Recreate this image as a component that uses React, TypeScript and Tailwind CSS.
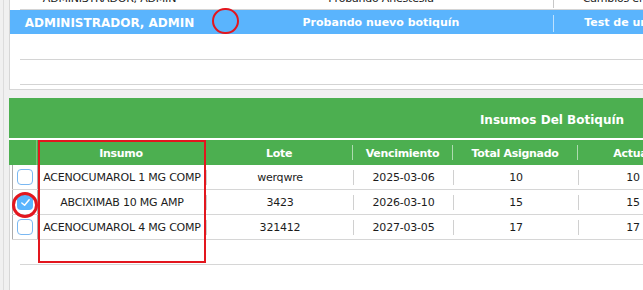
const FONT = "font-['DejaVu_Sans',Verdana,sans-serif]";

type Item = { insumo: string; lote: string; vence: string; total: number; actual: number; checked: boolean };

const ITEMS: Item[] = [
  { insumo: "ACENOCUMAROL 1 MG COMP", lote: "werqwre", vence: "2025-03-06", total: 10, actual: 10, checked: false },
  { insumo: "ABCIXIMAB 10 MG AMP", lote: "3423", vence: "2026-03-10", total: 15, actual: 15, checked: true },
  { insumo: "ACENOCUMAROL 4 MG COMP", lote: "321412", vence: "2027-03-05", total: 17, actual: 17, checked: false },
];

const BOTIQUINES = [
  { user: "ADMINISTRADOR, ADMIN", name: "Probando Anestesia", desc: "Cambios en el botiquín", selected: false },
  { user: "ADMINISTRADOR, ADMIN", name: "Probando nuevo botiquín", desc: "Test de un botiquín", selected: true },
  { user: "", name: "", desc: "", selected: false },
  { user: "", name: "", desc: "", selected: false },
];

function Sep({ light }: { light?: boolean }) {
  return <div className={`w-px h-[15px] shrink-0 self-center ${light ? "bg-white/55" : "bg-[#d0d0d0]"}`} />;
}

function Checkbox({ checked }: { checked: boolean }) {
  if (checked) {
    return (
      <div className="w-[16px] h-[16px] rounded-[4px] bg-[#5ab4fd] flex items-center justify-center">
        <svg width="11" height="11" viewBox="0 0 12 12" fill="none">
          <path d="M2 6.5 L5 9 L10 3" stroke="white" strokeWidth="1.6" strokeLinecap="round" strokeLinejoin="round" />
        </svg>
      </div>
    );
  }
  return <div className="w-[16px] h-[16px] rounded-[4px] border border-[#7ab8f2] bg-white" />;
}

export default function App() {
  return (
    <div className={`relative w-[643px] h-[290px] overflow-hidden bg-[#f0f0f0] text-[#1c1c1c] ${FONT}`}>
      <div className="flex h-full">
        {/* left edge of the window frame */}
        <div className="w-[9px] shrink-0 flex">
          <div className="w-[3px]" />
          <div className="w-px bg-[#dcdcdc]" />
        </div>

        <div className="w-[1086px] shrink-0 flex flex-col">
          {/* botiquines list */}
          <div className="h-[90px] shrink-0 bg-white border-l border-b border-[#d6d6d6] overflow-hidden">
            <div className="-mt-[15px] flex flex-col">
              {BOTIQUINES.map((b, i) => (
                <div key={i} className="flex flex-col">
                  <div
                    className={`h-[24px] flex items-center ${
                      b.selected
                        ? "bg-[#5ab4fd] text-white font-bold text-[11px] pt-[2px]"
                        : "pt-[5px] text-[11px] tracking-[-0.2px]"
                    }`}
                  >
                    <div className={`w-[199px] shrink-0 text-center ${b.selected ? "text-[12px]" : ""}`}>{b.user}</div>
                    <div className="w-[344px] shrink-0 text-center">{b.name}</div>
                    <div className={`w-px h-[17px] ${b.user ? (b.selected ? "bg-white/60" : "bg-[#c8c8c8]") : ""}`} />
                    <div className="w-[180px] shrink-0 text-center whitespace-nowrap">{b.desc}</div>
                  </div>
                  <div className={`h-px ml-[10px] ${b.selected ? "" : "bg-[#d4d4d4]"}`} />
                </div>
              ))}
            </div>
          </div>

          <div className="h-[8px] shrink-0" />

          {/* insumos panel */}
          <div className="flex-1 flex flex-col bg-white">
            <div className="h-[40px] shrink-0 pt-[3px] bg-[#4caf50] flex items-center justify-center text-white font-bold text-[12px]">
              Insumos Del Botiquín
            </div>
            <div className="h-[2px] shrink-0 bg-white" />
            <div className="h-[25px] shrink-0 bg-[#4caf50] flex text-white font-bold text-[11px] tracking-[-0.3px]">
              <div className="w-[28px] shrink-0 border-r border-white/25" />
              <div className="w-[168px] shrink-0 pt-[3px] flex items-center justify-center">Insumo</div>
              <Sep light />
              <div className="w-[146px] shrink-0 pt-[3px] flex items-center justify-center">Lote</div>
              <Sep light />
              <div className="w-[99px] shrink-0 pt-[3px] flex items-center justify-center">Vencimiento</div>
              <Sep light />
              <div className="w-[124px] shrink-0 pt-[3px] flex items-center justify-center">Total Asignado</div>
              <Sep light />
              <div className="w-[108px] shrink-0 pt-[3px] flex items-center justify-center">Actual</div>
            </div>

            <div className="flex-1 flex flex-col border-l border-[#d6d6d6]">
              {ITEMS.map((it) => (
                <div
                  key={it.insumo}
                  className="h-[25px] shrink-0 ml-[2px] flex border-b border-[#d6d6d6] text-[11px] tracking-[-0.2px]"
                >
                  <div className="w-[26px] shrink-0 border-x border-[#ababab] flex items-center justify-center">
                    <Checkbox checked={it.checked} />
                  </div>
                  <div className="w-[168px] shrink-0 pt-[3px] flex items-center justify-center whitespace-nowrap">
                    {it.insumo}
                  </div>
                  <Sep />
                  <div className="w-[146px] shrink-0 pt-[3px] flex items-center justify-center">{it.lote}</div>
                  <Sep />
                  <div className="w-[99px] shrink-0 pt-[3px] flex items-center justify-center">{it.vence}</div>
                  <Sep />
                  <div className="w-[124px] shrink-0 pt-[3px] flex items-center justify-center">{it.total}</div>
                  <Sep />
                  <div className="w-[108px] shrink-0 pt-[3px] flex items-center justify-center">{it.actual}</div>
                </div>
              ))}
              <div className="h-[24px] shrink-0" />
              <div className="h-px ml-[10px] bg-[#d6d6d6]" />
            </div>
          </div>
        </div>
      </div>

      {/* red annotations */}
      <div className="absolute left-[212px] top-[8px] w-[27px] h-[26px] rounded-full border-2 border-[#e3161e]" />
      <div className="absolute left-[12px] top-[192px] w-[26px] h-[26px] rounded-full border-[3px] border-[#e3161e]" />
      <div className="absolute left-[38px] top-[140px] w-[168px] h-[123px] border-2 border-[#e3161e]" />
    </div>
  );
}
